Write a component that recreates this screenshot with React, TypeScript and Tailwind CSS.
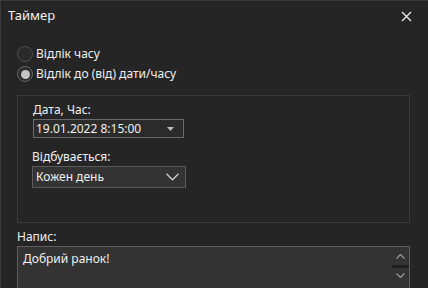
import React from 'react';

function Radio({ checked, label }: { checked?: boolean; label: string }) {
  return (
    <label className="flex items-center h-[20px]">
      <span
        className={
          checked
            ? 'w-[16px] h-[16px] rounded-full border border-[#666666] bg-[#2c2c2c] flex items-center justify-center'
            : 'w-[16px] h-[16px] rounded-full border border-[#4e4e4e] bg-[#2a2a2a] flex items-center justify-center'
        }
      >
        {checked && <span className="w-[9px] h-[9px] rounded-full bg-[#c4c4c4]" />}
      </span>
      <span className="ml-[3px]">{label}</span>
    </label>
  );
}

export default function App() {
  return (
    <div
      className="w-[428px] h-[288px] overflow-hidden bg-[#252525] text-[#f0f0f0] text-[12px] border-l border-t border-[#3a3a3a]"
      style={{ fontFamily: '"Segoe UI", "Noto Sans", "Open Sans", sans-serif' }}
    >
      {/* Title bar */}
      <div className="h-[30px] flex items-center justify-between pl-[7px] pr-[16px]">
        <span className="text-[13px]">Таймер</span>
        <svg width="11" height="11" viewBox="0 0 11 11" className="text-[#e8e8e8]">
          <path d="M1 1L10 10M10 1L1 10" stroke="currentColor" strokeWidth="1.4" />
        </svg>
      </div>

      <div className="pl-[16px] pr-[18px] pt-[13px]">
        <Radio label="Відлік часу" />
        <Radio checked label="Відлік до (від) дати/часу" />

        {/* Group box */}
        <div className="mt-[11px] h-[128px] border border-[#3a3a3a] pl-[15px] pt-[6px]">
          <div className="leading-[16px]">Дата, Час:</div>
          <div className="mt-[1px] w-[151px] h-[19px] border border-[#6a6a6a] bg-[#2b2b2b] flex items-center justify-between pl-[2px] pr-[9px]">
            <span>19.01.2022 8:15:00</span>
            <svg width="7" height="4" viewBox="0 0 7 4">
              <path d="M0 0H7L3.5 4Z" fill="#bdbdbd" />
            </svg>
          </div>
          <div className="mt-[11px] leading-[16px] -ml-[1px]">Відбувається:</div>
          <div className="mt-[1px] -ml-[1px] w-[154px] h-[22px] border border-[#5a5a5a] bg-[#333333] flex items-center justify-between pl-[3px] pr-[6px]">
            <span>Кожен день</span>
            <svg width="13" height="8" viewBox="0 0 13 8">
              <path d="M0.5 0.8L6.5 6.8L12.5 0.8" stroke="#cfcfcf" strokeWidth="1.3" fill="none" />
            </svg>
          </div>
        </div>

        <div className="mt-[6px] leading-[16px]">Напис:</div>
        <div className="mt-[1px] h-[44px] border border-[#5e5e5e] bg-[#333333] flex justify-between">
          <span className="pl-[5px] pt-[3px]">Добрий ранок!</span>
          <div className="w-[18px] flex flex-col items-center pt-[7px]">
            <svg width="9" height="5" viewBox="0 0 9 5">
              <path d="M0.5 4.5L4.5 0.5L8.5 4.5" stroke="#9a9a9a" strokeWidth="1.2" fill="none" />
            </svg>
            <div className="mt-[6px] w-[17px] h-[3px] bg-[#1e1e1e]" />
            <svg width="9" height="5" viewBox="0 0 9 5" className="mt-[5px]">
              <path d="M0.5 0.5L4.5 4.5L8.5 0.5" stroke="#9a9a9a" strokeWidth="1.2" fill="none" />
            </svg>
          </div>
        </div>
      </div>
    </div>
  );
}
